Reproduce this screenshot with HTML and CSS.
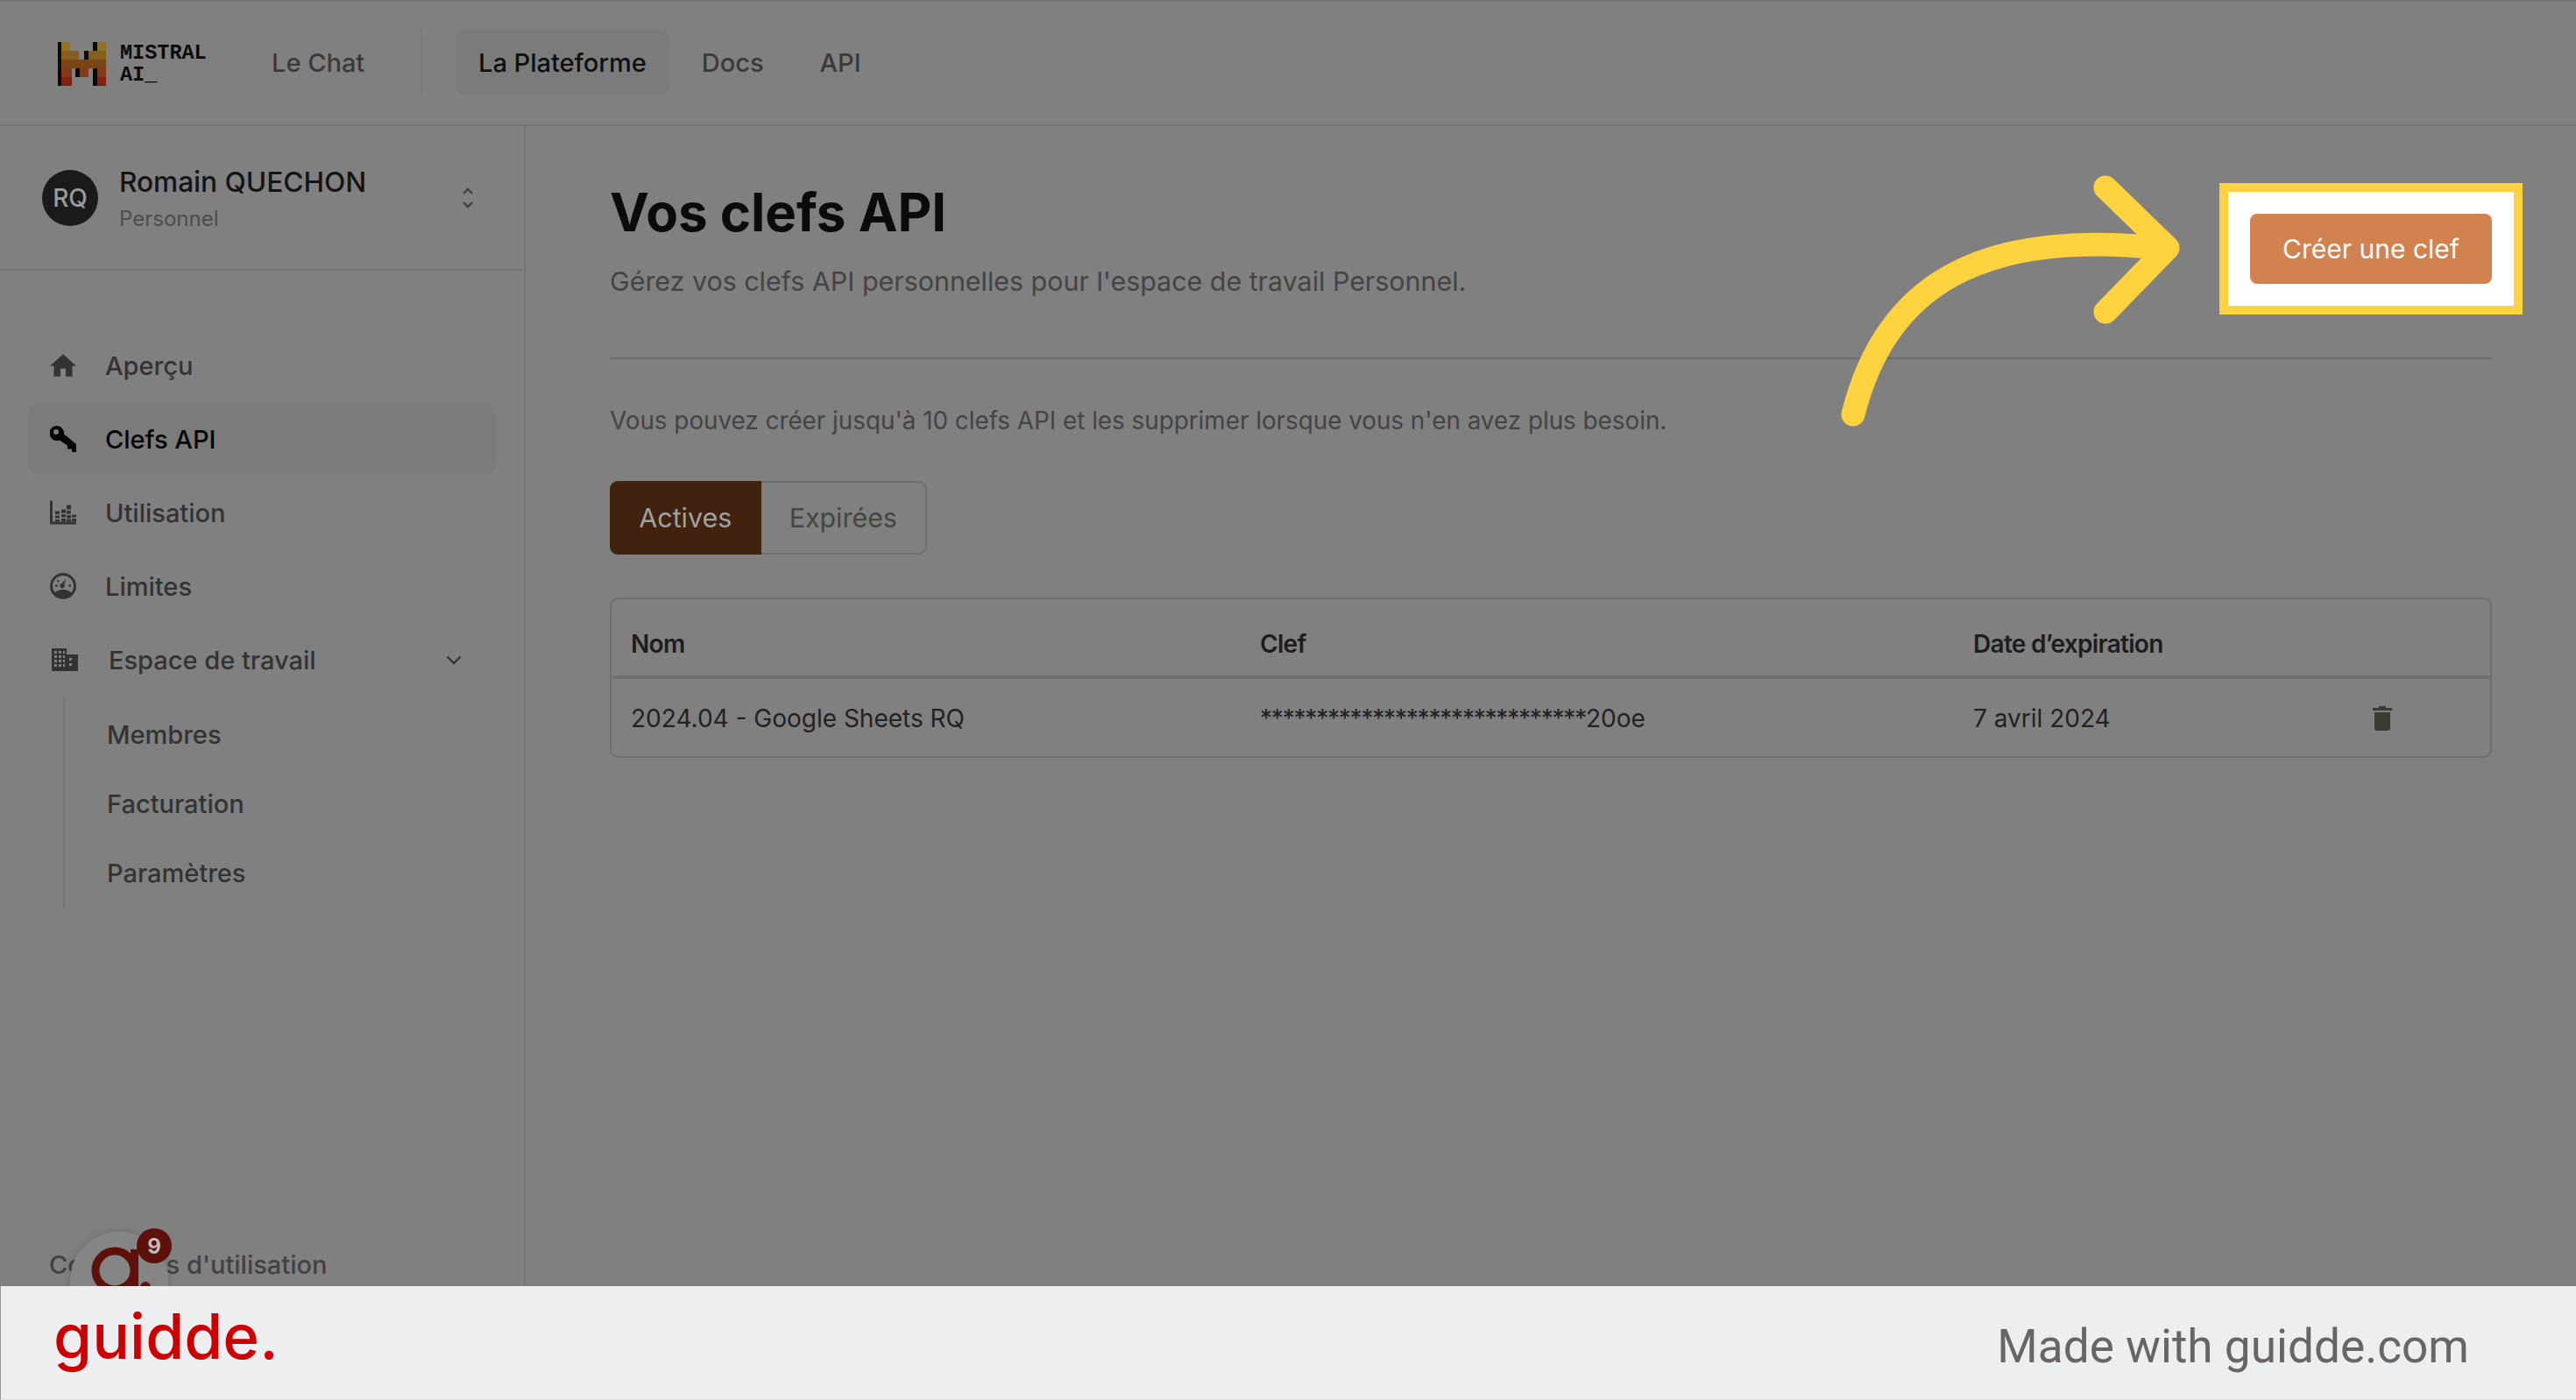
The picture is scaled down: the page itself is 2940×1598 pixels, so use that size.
FILE: index.html
```html
<!DOCTYPE html>
<html lang="fr">

<head>
    <meta charset="UTF-8">
    <meta name="viewport" content="width=device-width, initial-scale=1.0">
    <title>Vos clefs API</title>
    <link rel="stylesheet" href="styles.css">
</head>

<body>

    <header class="topbar">
        <div class="brand">
            <svg class="brand-mark" viewBox="0 0 55 50" shape-rendering="crispEdges">
                <rect x="0" y="0" width="4" height="50" fill="#0a0a0a" />
                <rect x="40" y="0" width="5" height="10" fill="#0a0a0a" />
                <rect x="30" y="10" width="5" height="10" fill="#0a0a0a" />
                <rect x="20" y="30" width="5" height="10" fill="#0a0a0a" />
                <rect x="40" y="30" width="5" height="20" fill="#0a0a0a" />
                <rect x="4" y="0" width="10" height="10" fill="#8f7322" />
                <rect x="45" y="0" width="10" height="10" fill="#8f7322" />
                <rect x="4" y="10" width="20" height="10" fill="#865f1f" />
                <rect x="35" y="10" width="20" height="10" fill="#865f1f" />
                <rect x="4" y="20" width="51" height="10" fill="#7a4516" />
                <rect x="4" y="30" width="12" height="10" fill="#853a14" />
                <rect x="25" y="30" width="10" height="10" fill="#853a14" />
                <rect x="45" y="30" width="10" height="10" fill="#853a14" />
                <rect x="4" y="40" width="12" height="10" fill="#871e14" />
                <rect x="45" y="40" width="10" height="10" fill="#871e14" />
            </svg>
            <div class="brand-name">MISTRAL<br>AI_</div>
        </div>
        <a class="top-link chat-link">Le Chat</a>
        <span class="top-sep"></span>
        <a class="top-link top-active">La Plateforme</a>
        <a class="top-link top-docs">Docs</a>
        <a class="top-link">API</a>
    </header>

    <div class="shell">
        <aside class="sidebar">
            <div class="account">
                <div class="avatar">RQ</div>
                <div class="account-text">
                    <div class="account-name">Romain QUECHON</div>
                    <div class="account-sub">Personnel</div>
                </div>
                <svg class="updown" viewBox="0 0 14 26" fill="none" stroke="#3f3f3f" stroke-width="2.4">
                    <path d="M2 8l5-5 5 5" />
                    <path d="M2 18l5 5 5-5" />
                </svg>
            </div>

            <nav class="nav">
                <a class="nav-row">
                    <svg class="nav-icon" viewBox="2 3 20 17" fill="#333">
                        <path d="M10 20v-6h4v6h5v-8h3L12 3 2 12h3v8z" />
                    </svg>
                    Aperçu
                </a>
                <a class="nav-row nav-active">
                    <svg class="nav-icon" viewBox="0 0 30 30" fill="#050505">
                        <path fill-rule="evenodd" d="M8 0a8.500 8.500 0 1 0 3 16.400L20 22.500v4h5V30h5v-9L16 9.500A8.500 8.500 0 0 0 8 0zM7 4a3 3 0 1 1 0 6a3 3 0 0 1 0-6z" />
                    </svg>
                    Clefs API
                </a>
                <a class="nav-row">
                    <svg class="nav-icon" viewBox="0 0 30 27" fill="#333">
                        <path d="M0 0h3v24h27v3H0z" />
                        <path d="M6 12h5v3.500H6zM6 17h5v3H6zM6 21.500h5v2.500H6zM13 10h5v4h-5zM13 15.500h5v3.500h-5zM13 20.500h5V24h-5zM19 5h5v5h-5zM19 11.500h5V15h-5zM19 16.500h5V20h-5zM19 21h5v3h-5zM25 16h5v3h-5zM25 20.500h5V24h-5z" />
                    </svg>
                    Utilisation
                </a>
                <a class="nav-row">
                    <svg class="nav-icon" viewBox="0 0 30 30" fill="#333">
                        <path d="M15 0a15 15 0 1 0 0 30a15 15 0 0 0 0-30zm0 3a12 12 0 0 1 12 12c0 3-1 5.500-2.700 7.600c-2-2.200-5.500-3.600-9.300-3.600s-7.300 1.400-9.300 3.600A12 12 0 0 1 3 15A12 12 0 0 1 15 3z" />
                        <path d="M18.500 6.500l-2.200 6.300a2.800 2.800 0 1 1-2.600-1z" />
                        <path d="M6 13.500h3v2H6zM21 13.500h3v2h-3zM9 7.500l2 2-1.300 1.300-2-2z" />
                    </svg>
                    Limites
                </a>
                <a class="nav-row nav-space">
                    <svg class="nav-icon" viewBox="0 0 30 26" fill="#333">
                        <path fill-rule="evenodd" d="M0 0h17v7h13v19H0zM3 3v3h3V3zm5 0v3h3V3zm5 0v3h2V3zM3 8v3h3V8zm5 0v3h3V8zm5 0v3h2V8zM3 13v3h3v-3zm5 0v3h3v-3zm5 0v3h2v-3zM3 18v3h3v-3zm5 0v3h3v-3zm5 0v3h2v-3zm7-7v3h3v-3zm0 6v3h3v-3z" />
                    </svg>
                    <span class="nav-space-label">Espace de travail</span>
                    <svg class="nav-chevron" viewBox="0 0 18 11" fill="none" stroke="#333" stroke-width="2.400">
                        <path d="M1.500 1.500L9 9l7.500-7.500" />
                    </svg>
                </a>
                <div class="subnav">
                    <a class="subnav-row">Membres</a>
                    <a class="subnav-row">Facturation</a>
                    <a class="subnav-row">Paramètres</a>
                </div>
            </nav>

            <a class="terms">Conditions d'utilisation</a>
        </aside>

        <main class="content">
            <div class="page-head">
                <div>
                    <h1>Vos clefs API</h1>
                    <p class="page-sub">Gérez vos clefs API personnelles pour l'espace de travail Personnel.</p>
                </div>
                <div class="highlight">
                    <button class="create-btn">Créer une clef</button>
                </div>
            </div>

            <hr class="rule">

            <p class="hint">Vous pouvez créer jusqu'à 10 clefs API et les supprimer lorsque vous n'en avez plus besoin.</p>

            <div class="tabs">
                <button class="tab tab-active">Actives</button>
                <button class="tab">Expirées</button>
            </div>

            <div class="keys">
                <div class="keys-row keys-head">
                    <div>Nom</div>
                    <div>Clef</div>
                    <div>Date d’expiration</div>
                    <div></div>
                </div>
                <div class="keys-row keys-item">
                    <div>2024.04 - Google Sheets RQ</div>
                    <div><span class="key-stars">*****************************</span>20oe</div>
                    <div>7 avril 2024</div>
                    <div>
                        <svg class="trash" viewBox="0 0 22 28" fill="#3b3b33">
                            <path d="M7 0h8v2h7v3H0V2h7zM2 7h18v18a3 3 0 0 1-3 3H5a3 3 0 0 1-3-3z" />
                        </svg>
                    </div>
                </div>
            </div>
        </main>
    </div>

    <footer class="guidde-bar">
        <div class="guidde-logo">guidde<span class="guidde-dot">.</span></div>
        <div class="guidde-made">Made with guidde.com</div>
    </footer>

    <!-- fleche jaune -->
    <svg class="arrow" viewBox="0 0 410 300" fill="none" stroke="#ffd23f" stroke-width="27" stroke-linecap="round" stroke-linejoin="round">
        <path d="M25 283C62 135 170 72 375 93" />
        <path d="M313 24L384 93L313 166" />
    </svg>

    <!-- widget guidde -->
    <div class="widget">
        <svg class="widget-mark" viewBox="0 0 70 70" fill="none">
            <circle cx="27" cy="30" r="22" stroke="#5e100a" stroke-width="9" />
            <rect x="45" y="6" width="9" height="50" fill="#5e100a" />
            <circle cx="62" cy="49" r="6" fill="#5e100a" />
        </svg>
        <span class="widget-badge">9</span>
    </div>

</body>

</html>
```

FILE: styles.css
```css
* {
    box-sizing: border-box;
}

body {
    margin: 0;
    height: 1598px;
    position: relative;
    overflow: hidden;
    display: flex;
    flex-direction: column;
    font-family: 'Inter', sans-serif;
    background-color: #808080;
    color: #333;
}

/* Barre du haut */
.topbar {
    height: 144px;
    flex: none;
    display: flex;
    align-items: flex-start;
    padding-top: 31px;
    border-top: 2px solid #777;
    border-bottom: 2px solid #747474;
    font-size: 29px;
    font-weight: 500;
}

.brand {
    display: flex;
    align-items: center;
    gap: 16px;
    margin-left: 66px;
    margin-top: 2px;
    height: 76px;
    width: 244px;
}

.brand-mark {
    width: 55px;
    height: 50px;
    flex: none;
}

.brand-name {
    font-family: 'Liberation Mono', monospace;
    font-weight: 700;
    font-size: 23.5px;
    line-height: 25px;
    color: #0a0a0a;
}

.top-link {
    height: 76px;
    display: flex;
    align-items: center;
    padding: 0 26px;
    color: #3a3a3a;
    border-radius: 12px;
}

.chat-link {
    padding: 0;
    width: 170px;
}

.top-sep {
    width: 2px;
    height: 76px;
    background-color: #7b7b7b;
    margin-right: 38px;
}

.top-active {
    background-color: #7b7b7b;
    color: #0f0f0f;
    margin-right: 11px;
}

.top-docs {
    margin-right: 12px;
}

.shell {
    flex: 1;
    display: flex;
    min-height: 0;
}

/* Barre laterale */
.sidebar {
    width: 600px;
    flex: none;
    display: flex;
    flex-direction: column;
    border-right: 2px solid #747474;
}

.account {
    height: 165px;
    flex: none;
    display: flex;
    align-items: center;
    padding: 0 0 0 48px;
    border-bottom: 2px solid #747474;
}

.avatar {
    width: 64px;
    height: 64px;
    border-radius: 50%;
    background-color: #1a1a1a;
    color: #9a9a9a;
    font-size: 28px;
    font-weight: 500;
    display: flex;
    align-items: center;
    justify-content: center;
    margin-right: 24px;
}

.account-text {
    width: 391px;
}

.account-name {
    font-size: 31.6px;
    font-weight: 500;
    color: #141414;
    line-height: 40px;
    margin-top: 2px;
}

.account-sub {
    font-size: 24px;
    color: #4d4d4d;
    line-height: 30px;
    margin-top: 7px;
}

.updown {
    width: 14px;
    height: 26px;
}

.nav {
    padding: 68px 32px 0;
    display: flex;
    flex-direction: column;
    gap: 4px;
}

.nav-row {
    height: 80px;
    display: flex;
    align-items: center;
    padding-left: 25px;
    border-radius: 12px;
    font-size: 29px;
    font-weight: 500;
    color: #333;
}

.nav-icon {
    width: 30px;
    height: 30px;
    flex: none;
    margin-right: 33px;
}

.nav-active {
    background-color: #7b7b7b;
    color: #050505;
}

.nav-space {
    padding-left: 27px;
}

.nav-space .nav-icon {
    margin-right: 35px;
}

.nav-space-label {
    width: 385px;
}

.nav-chevron {
    width: 18px;
    height: 11px;
}

.subnav {
    margin: 0 0 0 40px;
    padding: 2px 0 0 48px;
    border-left: 2px solid #747474;
    width: 500px;
}

.subnav-row {
    height: 79px;
    display: flex;
    align-items: center;
    font-size: 29px;
    font-weight: 500;
    color: #333;
}

.terms {
    margin-top: auto;
    margin-bottom: 7px;
    padding-left: 56px;
    font-size: 29px;
    font-weight: 500;
    color: #424242;
}

/* Contenu */
.content {
    flex: 1;
    padding: 0 96px 0 96px;
    min-width: 0;
}

.page-head {
    display: flex;
    justify-content: space-between;
    align-items: flex-start;
    padding-top: 64px;
}

h1 {
    margin: 0;
    font-size: 60px;
    line-height: 68px;
    font-weight: 700;
    color: #0b0b0b;
}

.page-sub {
    margin: 26px 0 0;
    font-size: 30.4px;
    line-height: 38px;
    color: #444;
}

.highlight {
    margin: 1px -35px 0 0;
    padding: 25px;
    background-color: #fff;
    border: 10px solid #ffd23f;
}

.create-btn {
    display: block;
    width: 276px;
    height: 80px;
    border: none;
    border-radius: 8px;
    background-color: #d1824f;
    color: #fff;
    font-family: inherit;
    font-size: 30px;
}

.rule {
    margin: 49px 0 0;
    border: none;
    border-top: 2px solid #6c6c6c;
}

.hint {
    margin: 52px 0 0;
    font-size: 27.8px;
    line-height: 36px;
    color: #444;
}

.tabs {
    display: flex;
    width: 362px;
    height: 84px;
    margin-top: 51px;
    border: 2px solid #6f6f6f;
    border-radius: 9px;
}

.tab {
    border: none;
    background: none;
    padding: 0;
    width: 189px;
    font-family: inherit;
    font-size: 30.4px;
    color: #46463e;
}

.tab-active {
    width: 174px;
    margin: -2px 0 -2px -2px;
    background-color: #40220f;
    color: #a0a0a0;
    border-radius: 9px 0 0 9px;
}

.keys {
    margin-top: 49px;
    width: 2148px;
    border: 2px solid #6f6f6f;
    border-radius: 9px;
}

.keys-row {
    display: grid;
    grid-template-columns: 718px 814px 441px 1fr;
    align-items: center;
    padding-left: 22px;
    font-size: 28px;
    color: #222;
}

.keys-head {
    height: 91px;
    padding-top: 14px;
    font-weight: 600;
    letter-spacing: -0.7px;
    color: #1d1d1d;
    border-bottom: 4px solid #707070;
}

.keys-item {
    height: 88px;
    padding-top: 2px;
}

.key-stars {
    letter-spacing: -1.2px;
}

.trash {
    display: block;
    width: 22px;
    height: 28px;
    margin-left: 15px;
}

/* Bandeau guidde */
.guidde-bar {
    height: 130px;
    flex: none;
    position: relative;
    z-index: 2;
    display: flex;
    justify-content: space-between;
    padding: 0 122px 0 60px;
    background-color: #edeef0;
    border-left: 1px solid #999;
    border-bottom: 1px solid #dcdde0;
}

.guidde-logo {
    margin-top: 15px;
    font-size: 71px;
    letter-spacing: 0.2px;
    font-weight: 500;
    color: #cc0000;
    line-height: 85px;
}

.guidde-dot {
    color: #d8000f;
}

.guidde-made {
    margin-top: 34px;
    font-family: 'Roboto', sans-serif;
    font-size: 53.2px;
    line-height: 70px;
    color: #666;
}

/* Elements par dessus */
.arrow {
    position: absolute;
    left: 2090px;
    top: 190px;
    width: 410px;
    height: 300px;
}

.widget {
    position: absolute;
    left: 80px;
    top: 1406px;
    width: 112px;
    height: 112px;
    border-radius: 50%;
    background-color: #858585;
    box-shadow: 0 0 12px rgba(0, 0, 0, 0.15);
}

.widget-mark {
    position: absolute;
    left: 24px;
    top: 14px;
    width: 70px;
    height: 70px;
}

.widget-badge {
    position: absolute;
    left: 76px;
    top: -4px;
    width: 40px;
    height: 40px;
    border-radius: 50%;
    background-color: #5e100a;
    color: #bdbdbd;
    font-size: 24px;
    font-weight: 700;
    display: flex;
    align-items: center;
    justify-content: center;
}
```
